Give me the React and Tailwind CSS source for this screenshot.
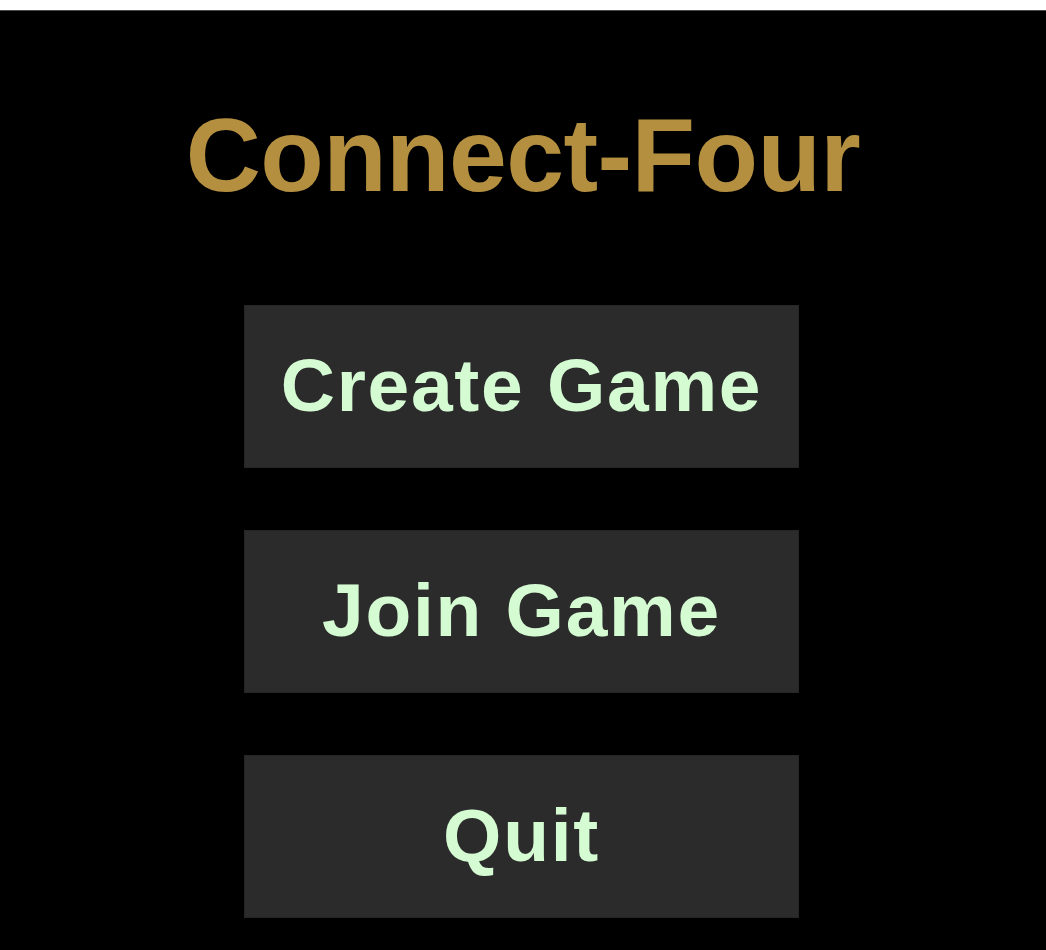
export default function App() {
  const btn =
    "w-[555px] h-[163px] bg-[#2b2b2b] border border-[#262626] flex items-center justify-center text-[#d5fbd3] font-bold text-[75px] leading-none tracking-[1.7px] pb-[2px]";
  const font = { fontFamily: '"Liberation Sans", Arial, Helvetica, sans-serif' };
  return (
    <div className="min-h-screen flex flex-col bg-black" style={font}>
      <div className="h-[11px] bg-white border-b border-[#4a4a4a] shrink-0" />
      <div className="flex-1 bg-black flex flex-col items-center pt-[92px] pb-[32px]">
        <h1 className="text-[104px] leading-none font-bold text-[#b48f40] tracking-[-0.6px]">
          Connect-Four
        </h1>
        <div className="mt-[98px] flex flex-col gap-[62px] pr-[3px]">
          <button className={btn}>Create Game</button>
          <button className={btn}>Join Game</button>
          <button className={btn}>Quit</button>
        </div>
      </div>
    </div>
  );
}
